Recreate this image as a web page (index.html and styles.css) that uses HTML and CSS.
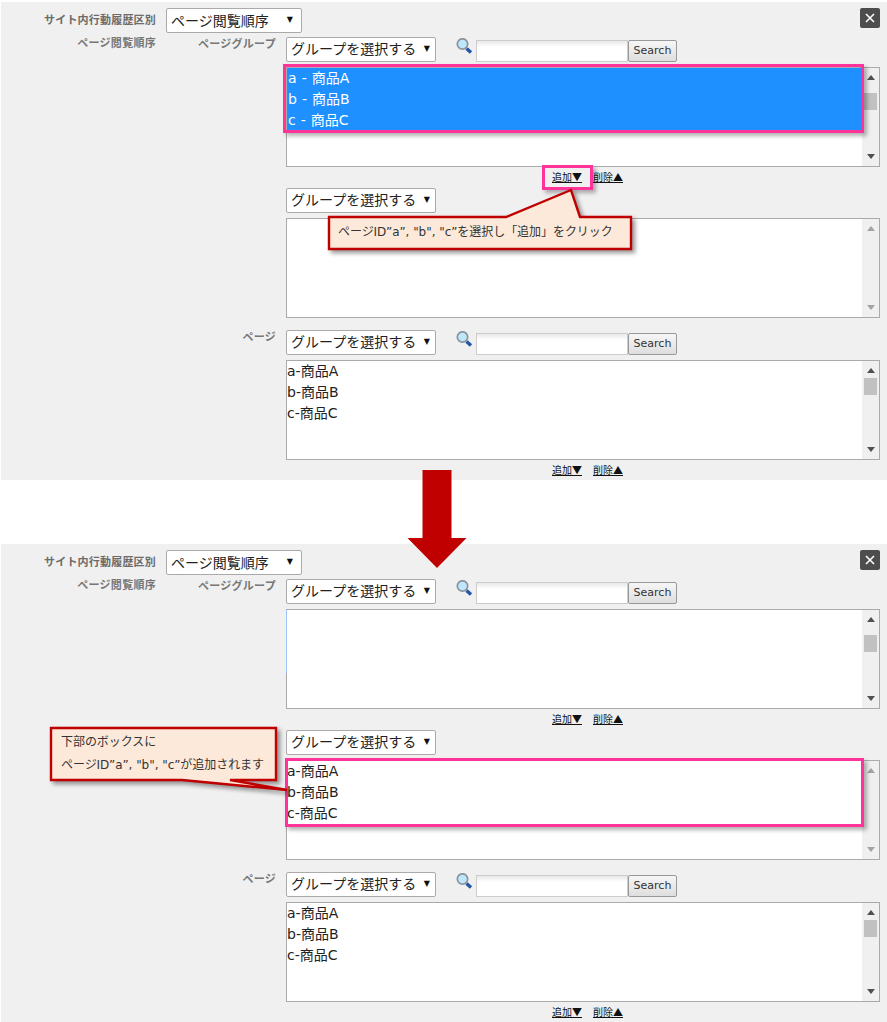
FILE: index.html
```html
<!DOCTYPE html>
<html lang="ja">
<head>
<meta charset="utf-8">
<title>ページ閲覧順序</title>
<link rel="stylesheet" href="styles.css">
</head>
<body>
<div class="page">
  <section class="panel">
    <div class="top-row">
      <div class="main-label">サイト内行動履歴区別</div>
      <div class="select select-wide"><span>ページ閲覧順序</span><i class="caret">▼</i></div>
      <div class="close"><svg width="10" height="10" viewBox="0 0 10 10"><path class="close-x" d="M1 1 9 9M9 1 1 9"/></svg></div>
    </div>
    <div class="detail">
      <div class="main-label detail-label">ページ閲覧順序</div>
      <div class="fields">
        <div class="field">
          <div class="sub-label">ページグループ</div>
          <div class="control">
            <div class="search-row">
              <div class="select"><span>グループを選択する</span><i class="caret">▼</i></div>
              <svg class="lens" width="17" height="16" viewBox="0 0 17 16"><path class="lens-handle" d="M10.5 10.5 15 14.5"/><circle class="lens-glass" cx="6.5" cy="6" r="5.2"/></svg>
              <div class="input"></div>
              <div class="button">Search</div>
            </div>
            <div class="listbox">
              <div class="options">
                <div class="option selected">a - 商品A</div>
                <div class="option selected">b - 商品B</div>
                <div class="option selected">c - 商品C</div>
              </div>
              <div class="scrollbar"><i class="up"></i><i class="thumb"></i><i class="down"></i></div>
            </div>
            <div class="links"><a>追加▼</a><a>削除▲</a></div>
            <div class="select"><span>グループを選択する</span><i class="caret">▼</i></div>
            <div class="listbox">
              <div class="options"></div>
              <div class="scrollbar disabled"><i class="up"></i><i class="down"></i></div>
            </div>
          </div>
        </div>
        <div class="field field-page">
          <div class="sub-label">ページ</div>
          <div class="control">
            <div class="search-row">
              <div class="select"><span>グループを選択する</span><i class="caret">▼</i></div>
              <svg class="lens" width="17" height="16" viewBox="0 0 17 16"><path class="lens-handle" d="M10.5 10.5 15 14.5"/><circle class="lens-glass" cx="6.5" cy="6" r="5.2"/></svg>
              <div class="input"></div>
              <div class="button">Search</div>
            </div>
            <div class="listbox">
              <div class="options">
                <div class="option">a-商品A</div>
                <div class="option">b-商品B</div>
                <div class="option">c-商品C</div>
              </div>
              <div class="scrollbar"><i class="up"></i><i class="thumb thumb-high"></i><i class="down"></i></div>
            </div>
            <div class="links"><a>追加▼</a><a>削除▲</a></div>
          </div>
        </div>
      </div>
    </div>
  </section>

  <section class="panel panel-after">
    <div class="top-row">
      <div class="main-label">サイト内行動履歴区別</div>
      <div class="select select-wide"><span>ページ閲覧順序</span><i class="caret">▼</i></div>
      <div class="close"><svg width="10" height="10" viewBox="0 0 10 10"><path class="close-x" d="M1 1 9 9M9 1 1 9"/></svg></div>
    </div>
    <div class="detail">
      <div class="main-label detail-label">ページ閲覧順序</div>
      <div class="fields">
        <div class="field">
          <div class="sub-label">ページグループ</div>
          <div class="control">
            <div class="search-row">
              <div class="select"><span>グループを選択する</span><i class="caret">▼</i></div>
              <svg class="lens" width="17" height="16" viewBox="0 0 17 16"><path class="lens-handle" d="M10.5 10.5 15 14.5"/><circle class="lens-glass" cx="6.5" cy="6" r="5.2"/></svg>
              <div class="input"></div>
              <div class="button">Search</div>
            </div>
            <div class="listbox">
              <div class="options focused"></div>
              <div class="scrollbar"><i class="up"></i><i class="thumb"></i><i class="down"></i></div>
            </div>
            <div class="links"><a>追加▼</a><a>削除▲</a></div>
            <div class="select"><span>グループを選択する</span><i class="caret">▼</i></div>
            <div class="listbox">
              <div class="options">
                <div class="option">a-商品A</div>
                <div class="option">b-商品B</div>
                <div class="option">c-商品C</div>
              </div>
              <div class="scrollbar disabled"><i class="up"></i><i class="down"></i></div>
            </div>
          </div>
        </div>
        <div class="field field-page">
          <div class="sub-label">ページ</div>
          <div class="control">
            <div class="search-row">
              <div class="select"><span>グループを選択する</span><i class="caret">▼</i></div>
              <svg class="lens" width="17" height="16" viewBox="0 0 17 16"><path class="lens-handle" d="M10.5 10.5 15 14.5"/><circle class="lens-glass" cx="6.5" cy="6" r="5.2"/></svg>
              <div class="input"></div>
              <div class="button">Search</div>
            </div>
            <div class="listbox">
              <div class="options">
                <div class="option">a-商品A</div>
                <div class="option">b-商品B</div>
                <div class="option">c-商品C</div>
              </div>
              <div class="scrollbar"><i class="up"></i><i class="thumb thumb-high"></i><i class="down"></i></div>
            </div>
            <div class="links"><a>追加▼</a><a>削除▲</a></div>
          </div>
        </div>
      </div>
    </div>
  </section>

  <div class="highlight hl-options"></div>
  <div class="highlight hl-add"></div>
  <div class="highlight hl-result"></div>

  <svg class="arrow" width="60" height="100" viewBox="0 0 60 100"><polygon class="arrow-shape" points="15.5,0 44.5,0 44.5,68 59.5,68 30,98 0.5,68 15.5,68"/></svg>

  <svg class="callout callout-one" width="320" height="76" viewBox="0 0 320 76">
    <path class="callout-shape" d="M1 28H178L243 1 252 28H303V60H1Z"/>
    <text class="callout-text" x="10" y="47">ページID”a”, "b", "c”を選択し「追加」をクリック</text>
  </svg>
  <svg class="callout callout-two" width="252" height="76" viewBox="0 0 252 76">
    <path class="callout-shape" d="M1 1H226V53H180L237 63 132 53H1Z"/>
    <text class="callout-text" x="11" y="19">下部のボックスに</text>
    <text class="callout-text" x="11" y="42">ページID”a”, "b", "c”が追加されます</text>
  </svg>
</div>
</body>
</html>
```

FILE: styles.css
```css
* {
  box-sizing: border-box;
}

html,
body {
  margin: 0;
  padding: 0;
  background: #fff;
}

body {
  font-family: "DejaVu Sans", "Noto Sans CJK JP", sans-serif;
  color: #222;
}

.page {
  position: relative;
  width: 887px;
  height: 1022px;
  padding-top: 2px;
  overflow: hidden;
}

.panel {
  margin-left: 1px;
  width: 886px;
  height: 478px;
  padding-top: 6px;
  background: #f0f0f0;
}

.panel-after {
  margin-top: 64px;
}

.top-row {
  display: flex;
  align-items: center;
  height: 25px;
}

.main-label {
  width: 155px;
  text-align: right;
  font-size: 11px;
  font-weight: 700;
  line-height: 14px;
  letter-spacing: 0.2px;
  color: #6b6b6b;
}

.select {
  display: flex;
  align-items: center;
  justify-content: space-between;
  width: 150px;
  height: 25px;
  padding: 0 5px 3px 4px;
  background: #fff;
  border: 1px solid #aaa;
  border-radius: 2px;
  font-size: 14px;
  color: #222;
  white-space: nowrap;
}

.select-wide {
  width: 136px;
  margin-left: 10px;
  padding-bottom: 2px;
}

.select-wide .caret {
  margin-right: 3px;
}

.caret {
  font-style: normal;
  font-size: 8px;
  color: #111;
}

.close {
  display: flex;
  align-items: center;
  justify-content: center;
  width: 20px;
  height: 20px;
  margin-left: auto;
  margin-right: 7px;
  margin-top: -5px;
  background: #4d4d4d;
  border-radius: 2px;
}

.close-x {
  fill: none;
  stroke: #fff;
  stroke-width: 1.6;
}

.detail {
  display: flex;
  margin-top: 4px;
}

.detail-label {
  flex: none;
  letter-spacing: 0.28px;
  color: #777;
}

.fields {
  flex: 1;
}

.field {
  display: flex;
}

.field-page {
  margin-top: 12px;
}

.sub-label {
  flex: none;
  width: 120px;
  padding-top: 1px;
  text-align: right;
  font-size: 11px;
  font-weight: 700;
  line-height: 14px;
  letter-spacing: 0.28px;
  color: #777;
}

.control {
  width: 594px;
  margin-left: 10px;
}

.search-row {
  display: flex;
  align-items: flex-start;
  height: 25px;
}

.lens {
  flex: none;
  margin: 1px 3px 0 20px;
}

.lens-glass {
  fill: #bfe6fb;
  stroke: #8a949c;
  stroke-width: 1.7;
}

.lens-handle {
  stroke: #2356a8;
  stroke-width: 3.4;
  fill: none;
}

.input {
  width: 152px;
  height: 22px;
  margin-top: 3px;
  background: linear-gradient(#e8e8e8, #fff 6px);
  border: 1px solid #ccc;
}

.button {
  width: 49px;
  height: 22px;
  margin-top: 3px;
  background: linear-gradient(#f6f6f6, #dedede);
  border: 1px solid #999;
  border-radius: 2px;
  font-size: 11px;
  line-height: 20px;
  text-align: center;
  color: #333;
}

.listbox {
  display: flex;
  width: 594px;
  height: 100px;
  margin-top: 5px;
  background: #fff;
  border: 1px solid #aaa;
}

.options {
  flex: 1;
}

.focused {
  margin-left: -1px;
  border-left: 1px solid #9cc4f8;
  height: 63px;
}

.option {
  height: 21px;
  padding-left: 0;
  font-size: 14px;
  line-height: 21px;
  color: #222;
  white-space: nowrap;
}

.selected {
  padding-left: 1px;
  word-spacing: 0.6px;
  background: #1e90ff;
  color: #fff;
}

.scrollbar {
  position: relative;
  flex: none;
  width: 17px;
  background: #f0f0f0;
}

.up,
.down {
  position: absolute;
  left: 5px;
  width: 0;
  height: 0;
  border-left: 4px solid transparent;
  border-right: 4px solid transparent;
}

.up {
  top: 7px;
  border-bottom: 5px solid #505050;
}

.down {
  bottom: 7px;
  border-top: 5px solid #505050;
}

.disabled .up {
  border-bottom-color: #a3a3a3;
}

.disabled .down {
  border-top-color: #a3a3a3;
}

.thumb {
  position: absolute;
  top: 25px;
  left: 2px;
  width: 13px;
  height: 17px;
  background: #c1c1c1;
}

.thumb-high {
  top: 17px;
}

.links {
  display: flex;
  justify-content: flex-start;
  gap: 11px;
  height: 21px;
  padding: 3px 0 0 266px;
  font-size: 10px;
  line-height: 14px;
}

.links a {
  color: #111;
  text-decoration: underline;
  font-family: "Noto Sans CJK JP", sans-serif;
  font-size: 10px;
}

.highlight {
  position: absolute;
  border: 3px solid #ff3399;
  box-shadow: 3px 3px 4px rgba(0, 0, 0, 0.3);
}

.hl-options {
  left: 283px;
  top: 64px;
  width: 581px;
  height: 69px;
}

.hl-add {
  left: 542px;
  top: 165px;
  width: 51px;
  height: 25px;
}

.hl-result {
  left: 285px;
  top: 758px;
  width: 579px;
  height: 69px;
}

.arrow {
  position: absolute;
  left: 407px;
  top: 470px;
}

.arrow-shape {
  fill: #c00000;
}

.callout {
  position: absolute;
  overflow: visible;
}

.callout-one {
  left: 328px;
  top: 189px;
}

.callout-two {
  left: 50px;
  top: 727px;
}

.callout-shape {
  fill: #fde9d9;
  stroke: #c00000;
  stroke-width: 2.4;
  filter: drop-shadow(3px 3px 2px rgba(0, 0, 0, 0.4));
}

.callout-text {
  font-family: "DejaVu Sans", "Noto Sans CJK JP", sans-serif;
  font-size: 12px;
  letter-spacing: -0.05px;
  fill: #333;
}
```
